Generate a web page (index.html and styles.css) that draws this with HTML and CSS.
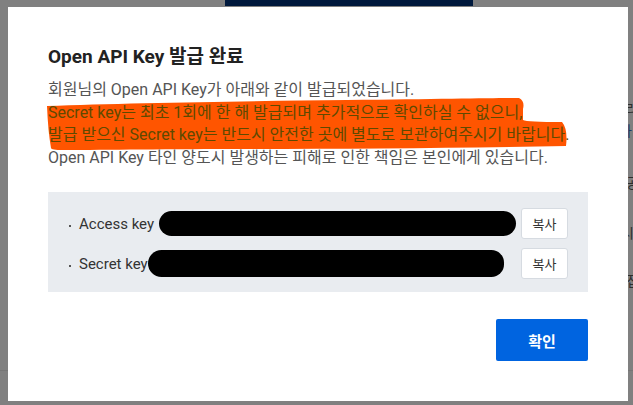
FILE: index.html
```html
<!DOCTYPE html>
<html lang="ko">
<head>
  <meta charset="utf-8">
  <title>Open API Key 발급 완료</title>
  <link rel="stylesheet" href="styles.css">
</head>
<body>

<div class="screen">
  <!-- page content under the dimmed overlay -->
  <div class="page-btn">Open API Key 발급안내</div>
  <div class="page-side">
    <span class="ps-1">리</span>
    <span class="ps-2">사</span>
    <span class="ps-3">- 공</span>
    <span class="ps-4">시</span>
    <span class="ps-5">- 접</span>
  </div>
  <div class="page-line"></div>

  <div class="modal">
    <h2 class="title">Open API Key 발급 완료</h2>

    <div class="notice">
      <svg class="marker" width="540" height="80" viewBox="0 0 540 80">
        <path d="M0,27 C80,24 200,22 300,21 C400,20 450,19 472,19 Q478,22 476,30 L476,41 Q480,43 515,43 Q521,50 519,67 C420,69 300,70 200,70 C120,70 60,71 16,71 Q4,71 4,69 Q1,52 0,27 Z" fill="#ff5500"/>
      </svg>
      <p>회원님의 Open API Key가 아래와 같이 발급되었습니다.</p>
      <p class="warn">Secret key는 최초 1회에 한 해 발급되며 추가적으로 확인하실 수 없으니,</p>
      <p class="warn">발급 받으신 Secret key는 반드시 안전한 곳에 별도로 보관하여주시기 바랍니다.</p>
      <p>Open API Key 타인 양도시 발생하는 피해로 인한 책임은 본인에게 있습니다.</p>
    </div>

    <ul class="keys">
      <li class="key-row">
        <span class="key-name">Access key</span>
        <span class="key-value kv-1"></span>
        <button class="copy">복사</button>
      </li>
      <li class="key-row">
        <span class="key-name">Secret key</span>
        <span class="key-value kv-2"></span>
        <button class="copy">복사</button>
      </li>
    </ul>

    <div class="actions">
      <button class="ok">확인</button>
    </div>
  </div>
</div>

</body>
</html>
```

FILE: styles.css
```css
html { background:#808080; }
body,html { margin:0; padding:0; font-family:"Roboto","Noto Sans CJK KR",sans-serif; }

.screen {
  position: relative;
  width: 633px;
  height: 405px;
  box-sizing: border-box;
  padding: 7px 0 0 8px;
  background: #808080;
  overflow: hidden;
}

.page-btn {
  position: absolute;
  left: 225px; top: -32px;
  width: 248px;
  height: 38px;
  background: #00193d;
  color: #9a9a9a;
  font-size: 17px;
  line-height: 38px;
  text-align: center;
}
.page-side {
  position: absolute;
  left: 625px; top: 0;
  font-size: 14px;
  color: #2e2e2e;
}
.page-side span { position:absolute; left:0; white-space:nowrap; }
.ps-1 { top: 98px; }
.ps-2 { top: 120px; left: -6px !important; color:#1c3a66; }
.ps-3 { top: 172px; left: -6px !important; }
.ps-4 { top: 222px; left: -4px !important; }
.ps-5 { top: 270px; left: -6px !important; }
.page-line {
  position: absolute;
  left: 0; top: 370px;
  width: 633px; height: 1px;
  background: #767676;
}

.modal {
  position: relative;
  box-sizing: border-box;
  width: 620px;
  height: 394px;
  background: #fff;
  padding: 36px 40px 0 40px;
}

.title {
  margin: 0;
  font-size: 19px;
  line-height: 28px;
  font-weight: bold;
  color: #222;
}

.notice { position:relative; margin-top:8px; }
.notice p {
  position: relative;
  margin: 0;
  font-size: 16px;
  line-height: 22.6px;
  color: #555;
}
.notice p.warn { color:#5e4a00; }

.marker {
  position: absolute;
  left: -1px;
  top: 0;
}

.keys {
  list-style: none;
  margin: 23px 0 0 0;
  padding: 16px 20px 13px 21px;
  background: #e9ecf0;
  height: 100px;
  box-sizing: border-box;
  width: 540px;
}
.key-row {
  display: flex;
  align-items: center;
  height: 31px;
  margin-bottom: 9px;
}
.key-name {
  font-size: 15px;
  color: #333;
  padding-left: 10px;
  position: relative;
}
.key-name:before {
  content: "";
  position: absolute;
  left: 0; top: 10px;
  width: 2px; height: 2px;
  background: #555;
}
.key-value {
  height: 25px;
  background: #000;
  border-radius: 13px;
}
.kv-1 { width: 357px; margin-left: 5px; }
.kv-2 { width: 356px; margin-left: 0; height: 27px; border-radius: 14px 13px 13px 14px; }

.copy {
  margin-left: auto;
  width: 47px;
  height: 31px;
  background: #fff;
  border: 1px solid #d6dbe1;
  border-radius: 3px;
  font-family: inherit;
  font-size: 13px;
  color: #333;
  padding: 0;
}

.actions { display:flex; justify-content:flex-end; width:540px; margin-top:27px; }
.ok {
  width: 92px;
  height: 42px;
  background: #0064e0;
  border: none;
  border-radius: 2px;
  color: #fff;
  font-family: inherit;
  font-size: 15px;
  font-weight: bold;
}
```
